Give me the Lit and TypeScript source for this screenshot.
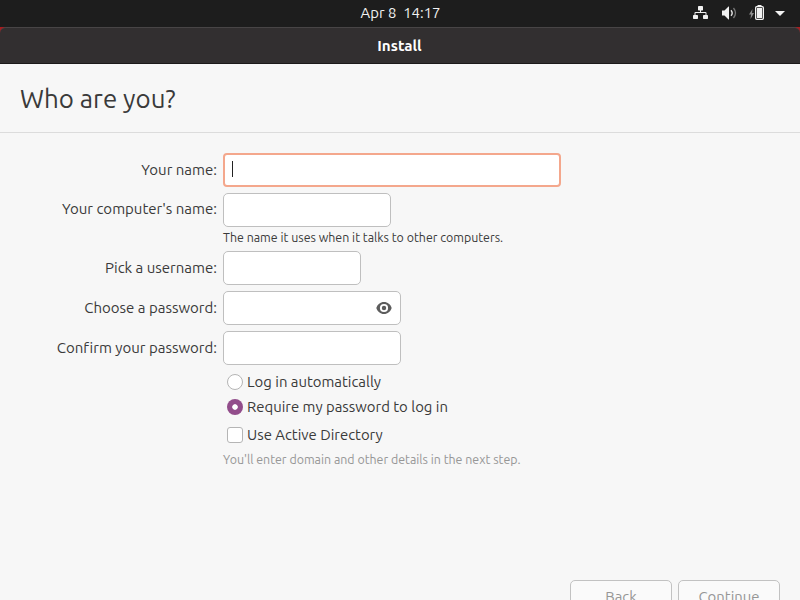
import { LitElement, html, css, svg, nothing } from "lit";
import { customElement, property } from "lit/decorators.js";

@customElement("status-icons")
class StatusIcons extends LitElement {
  static styles = css`
    :host { display: block; width: 120px; height: 27px; }
    svg { display: block; }
  `;
  render() {
    return html`<svg width="120" height="27" viewBox="680 0 120 27">
      ${svg`
      <g fill="#f2f2f2">
        <rect x="698" y="6" width="5" height="4.5" rx=".7"/>
        <rect x="693" y="15" width="5" height="4" rx=".7"/>
        <rect x="703" y="15" width="5" height="4" rx=".7"/>
        <path d="M700 10h1v2h4.500q1 0 1 1v2h-1v-2h-10v2h-1v-2q0-1 1-1h4.500z"/>
        <path d="M722 10.500h2.500l4-4h.5v13h-.5l-4-4h-2.500z"/>
        <path d="M780 16l-5-5h10z"/>
      </g>
      <path d="M731 10.200q2.400 2.800 0 5.600" fill="none" stroke="#e4e4e4" stroke-width="1.400"/>
      <path d="M733.500 8q4 5 0 10" fill="none" stroke="#777" stroke-width="1.300"/>
      <path d="M752.500 9l-3.500 5.500h2l-.5 4.500 3.500-6h-2z" fill="#8d8d8d"/>
      <rect x="755.650" y="6.650" width="7.700" height="12.700" rx="1" fill="none" stroke="#f2f2f2" stroke-width="1.300"/>
      <rect x="757.500" y="5" width="4" height="2" fill="#f2f2f2"/>
      <rect x="757" y="8" width="5" height="10" fill="#f2f2f2"/>`}
    </svg>`;
  }
}

@customElement("form-field")
class FormField extends LitElement {
  @property() label = "";
  @property({ type: Number }) width = 178;
  @property({ type: Boolean }) focused = false;
  @property({ type: Boolean }) reveal = false;
  static styles = css`
    :host { display: flex; height: 34px; align-items: center; }
    .label { width: 217px; margin-right: 6px; text-align: right; white-space: nowrap; font-size: 15px;
      font-variant-ligatures: none; padding-bottom: var(--label-lift, 0px); }
    .box { box-sizing: border-box; height: 34px; background: #fff; border: 1px solid #bfbfbf; border-radius: 5px;
      display: flex; align-items: center; justify-content: flex-end; padding-right: 8px; }
    .focused { border: 2px solid #f4a78c; border-radius: 4px; justify-content: flex-start; padding-left: 7px; }
    .caret { width: 1px; height: 16px; margin-top: -2px; background: #222; }
  `;
  render() {
    return html`<div class="label">${this.label}</div>
      <div class="box ${this.focused ? "focused" : ""}" style="width:${this.width}px">
        ${this.focused ? html`<div class="caret"></div>` : nothing}
        ${this.reveal
          ? html`<svg width="16" height="14" viewBox="0 0 16 14">
              <path d="M8 1C4.300 1 1.500 3.500.3 7 1.500 10.500 4.300 13 8 13s6.500-2.500 7.700-6C14.500 3.500 11.700 1 8 1z" fill="#5c5c5c"/>
              <circle cx="8" cy="7" r="4.100" fill="#fff"/><circle cx="8" cy="7" r="2.200" fill="#5c5c5c"/>
            </svg>`
          : nothing}
      </div>`;
  }
}

@customElement("app-root")
class AppRoot extends LitElement {
  static styles = css`
    :host { display: flex; flex-direction: column; width: 800px; height: 600px; overflow: hidden; background: #f7f7f7;
      color: #3a3a3a; font: 14.9px/20px "Ubuntu", "Noto Sans", sans-serif; }
    .top { height: 27px; flex: none; background: #1d1d1d; color: #f2f2f2; display: grid; grid-template-columns: 120px 1fr 120px; }
    .clock { text-align: center; line-height: 26px; white-space: pre; padding-left: 1px; }
    .frame { background: #a51d20; flex: none; height: 37px; }
    .bar { box-sizing: border-box; height: 37px; background: #322f30; border-top: 1px solid #484546; border-bottom: 1px solid #1c1a1a;
      border-radius: 6px 6px 0 0; color: #fff; text-align: center; font-weight: 700; font-size: 15.2px; line-height: 36px; padding-right: 1px; }
    .head { box-sizing: border-box; height: 69px; flex: none; border-bottom: 1px solid #dcdcdc; padding-left: 20px; font-size: 25.9px; line-height: 69px; }
    .form { flex: 1; display: flex; flex-direction: column; gap: 6px; padding-top: 20px; }
    .lifted { --label-lift: 2px; }
    .note { font-size: 12.4px; line-height: 20px; height: 24px; margin: -6px 0 -6px 223px; white-space: nowrap; }
    .opts { margin: -2px 0 0 227px; }
    .opt { display: flex; align-items: center; gap: 4px; height: 25px; }
    .opt:last-child { margin-top: 3px; }
    .mark { box-sizing: border-box; width: 16px; height: 16px; border: 1px solid #b5b5b5; background: #fff; border-radius: 3px; }
    .radio { border-radius: 50%; }
    .radio.on { border: none; background: radial-gradient(circle, #fff 2.4px, #924d8b 3.1px); }
    .muted { color: #969696; margin-top: -4px; }
    .actions { height: 20px; flex: none; display: flex; justify-content: flex-end; gap: 6px; padding-right: 20px; }
    .btn { box-sizing: border-box; width: 102px; height: 34px; border: 1px solid #c2c2c2; border-radius: 5px; background: #fafafa;
      color: #969696; text-align: center; line-height: 32px; }
  `;
  render() {
    return html`
      <div class="top"><span></span><div class="clock">Apr 8  14:17</div><status-icons></status-icons></div>
      <div class="frame"><div class="bar"><span>Install</span></div></div>
      <div class="head"><span>Who are you?</span></div>
      <div class="form">
        <form-field label="Your name:" width="338" focused></form-field>
        <form-field class="lifted" label="Your computer's name:" width="168"></form-field>
        <div class="note">The name it uses when it talks to other computers.</div>
        <form-field label="Pick a username:" width="138"></form-field>
        <form-field label="Choose a password:" reveal></form-field>
        <form-field label="Confirm your password:"></form-field>
        <div class="opts">
          <div class="opt"><span class="mark radio"></span><span>Log in automatically</span></div>
          <div class="opt"><span class="mark radio on"></span><span>Require my password to log in</span></div>
          <div class="opt"><span class="mark"></span><span>Use Active Directory</span></div>
        </div>
        <div class="note muted">You'll enter domain and other details in the next step.</div>
      </div>
      <div class="actions"><div class="btn">Back</div><div class="btn">Continue</div></div>`;
  }
}
